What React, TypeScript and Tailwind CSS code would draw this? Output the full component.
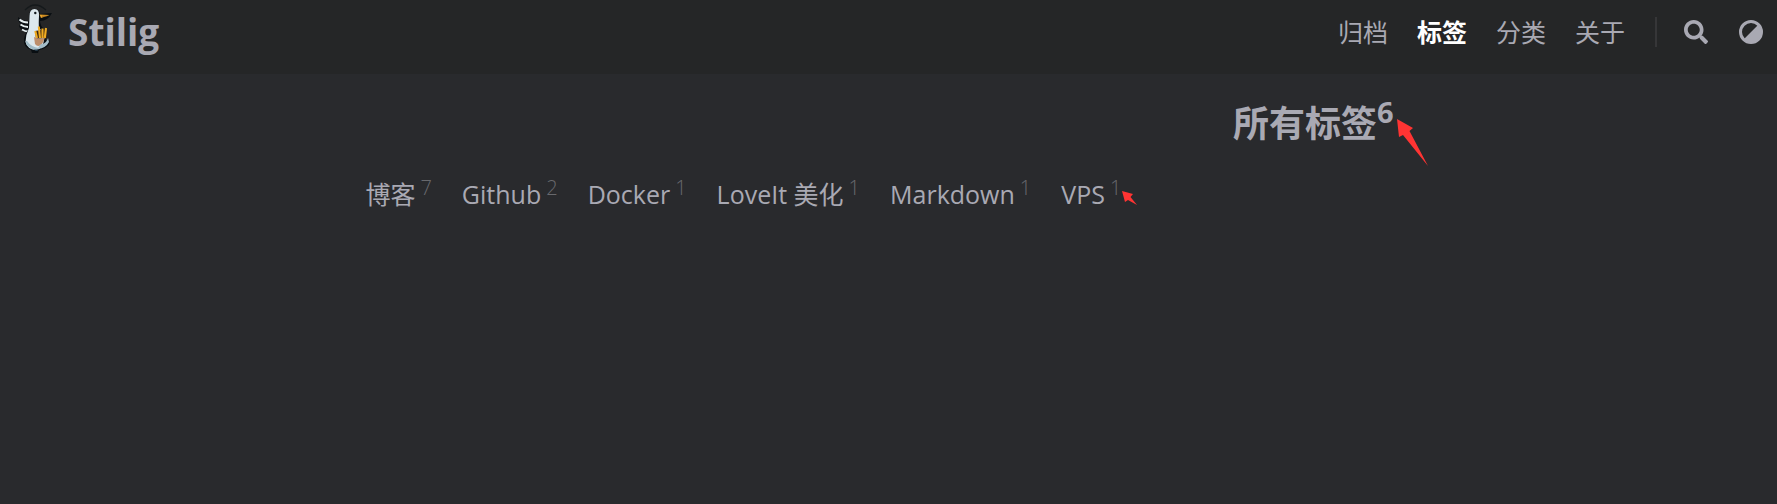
import React from "react";

const navLinks = [
  { label: "归档", active: false },
  { label: "标签", active: true },
  { label: "分类", active: false },
  { label: "关于", active: false },
];

const tags = [
  { name: "博客", count: 7 },
  { name: "Github", count: 2 },
  { name: "Docker", count: 1 },
  { name: "LoveIt 美化", count: 1 },
  { name: "Markdown", count: 1 },
  { name: "VPS", count: 1, marked: true },
];

function Logo() {
  return (
    <svg viewBox="0 0 36 50" className="h-[50px] w-9" aria-hidden="true">
      <path d="M8 6Q18-4 29 6" fill="none" stroke="#15191b" strokeWidth="1.2" />
      <path d="M12 17Q5 17 1 13Q1 18 4 20Q1 21 3 24Q5 27 12 28Z" fill="#0b1014" />
      <path d="M2.500 15.500Q6 18.500 11 18.500M3.500 20.500Q7 23 11 23M5 25.500Q8 27.500 11 27.500" fill="none" stroke="#e4edef" strokeWidth="1.900" />
      <path d="M12 12Q12 5 17.500 5Q22 5 23 10L35 9Q31 17 23 17Q23 22 28 26L29 37Q34 34 32 41Q28 45 22 46L21 49H15L14 46Q6 43 7 35Q8 29 12 25Z" fill="#090e12" />
      <path d="M12.500 12Q12.500 5 17.500 5Q22.500 5 22 12Q21.500 20 22 24Q27 28 27 36Q26 45 19 46Q10 45 8.500 38Q8.500 31 12 24Z" fill="#dce7ec" />
      <path d="M8.500 37Q10 45 19 46L22 44Q14 43 10 37Z" fill="#a0bbc7" />
      <path d="M22.500 10.500L32.500 11L24 14Z" fill="#e9a42b" />
      <path d="M25 12.200L30 12" stroke="#8a5412" strokeWidth=".7" />
      <circle cx="18.300" cy="9" r="1.200" fill="#11171b" />
      <path d="M18 27L30 25V34L19 35Z" fill="#3b2711" />
      <path d="M18.300 27L20 34M21.800 22.500L23 34M25.500 24.500L25.500 34M29 24L27.800 34" stroke="#f0ac22" strokeWidth="2.100" />
      <path d="M17 33Q22 35.500 28 34L25 40Q21 44 18 40Z" fill="#bd8e6b" />
      <path d="M31 34Q29 40 24 40Q21 43 21 45Q29 44 32 38Z" fill="#a3bdc9" />
      <path d="M17 45.500Q19 48.500 22 45.500" fill="#263b49" />
    </svg>
  );
}

function SearchIcon() {
  return (
    <svg viewBox="0 0 512 512" className="size-6" fill="currentColor" aria-hidden="true">
      <path d="M505 442.700 405.300 343c-4.500-4.500-10.600-7-17-7H372c27.600-35.300 44-79.700 44-128C416 93.100 322.900 0 208 0S0 93.100 0 208s93.100 208 208 208c48.300 0 92.700-16.400 128-44v16.300c0 6.400 2.500 12.500 7 17l99.700 99.700c9.400 9.400 24.600 9.400 33.900 0l28.300-28.300c9.400-9.400 9.400-24.600.1-34zM208 336c-70.700 0-128-57.200-128-128 0-70.700 57.200-128 128-128 70.700 0 128 57.200 128 128 0 70.700-57.200 128-128 128z" />
    </svg>
  );
}

function ThemeIcon() {
  return (
    <svg viewBox="0 0 24 24" className="size-6" aria-hidden="true">
      <circle cx="12" cy="12" r="10.500" fill="none" stroke="currentColor" strokeWidth="3" />
      <path d="M19.500 4.500A10.600 10.600 0 0 1 4.500 19.500Z" fill="currentColor" />
    </svg>
  );
}

export default function App() {
  return (
    <div className="min-h-screen bg-[#292a2d] font-['Open_Sans','Noto_Sans_CJK_SC',sans-serif] text-[25px] leading-8 text-[#a9a9b3]">
      <header className="flex h-[74px] items-start justify-between bg-[#252627] pr-3.5 pl-[17px]">
        <a href="#home" className="flex items-start gap-[15px]">
          <span className="pt-1"><Logo /></span>
          <span className="pt-2 text-[37px] leading-12 font-bold">Stilig</span>
        </a>
        <nav className="flex h-16 items-center">
          <div className="flex gap-[29px]">
            {navLinks.map((link) => (
              <a
                key={link.label}
                href={"#" + link.label}
                className={link.active ? "font-bold text-white" : ""}
              >
                {link.label}
              </a>
            ))}
          </div>
          <span className="ml-[30px] h-[30px] w-0.5 bg-[#363638]" />
          <button type="button" aria-label="搜索" className="ml-[27px]">
            <SearchIcon />
          </button>
          <button type="button" aria-label="切换主题" className="ml-[31px]">
            <ThemeIcon />
          </button>
        </nav>
      </header>
      <main className="mx-auto w-3/5 pt-5">
        <h1 className="flex justify-end pr-7 text-4xl leading-15 font-bold">
          <span>所有标签</span>
          <span className="relative">
            <sup className="top-[-14px] text-[29px] leading-none">6</sup>
            <svg viewBox="0 0 34 50" className="absolute top-6 left-full h-[50px] w-[34px]" aria-hidden="true">
              <path d="M3 1L19 10L15.500 13L34 48L9 17L5 19Z" fill="#ff3433" />
            </svg>
          </span>
        </h1>
        <ul className="flex flex-wrap gap-x-[30px] pt-5 pl-2.5">
          {tags.map((tag) => (
            <li key={tag.name} className="flex leading-10">
              <a href={"#" + tag.name} className="flex gap-[5px]">
                <span>{tag.name}</span>
                <span className="relative text-xl leading-7 font-light text-[#68696d]">
                  {tag.count}
                  {tag.marked && (
                    <svg viewBox="0 0 18 18" className="absolute top-4 left-full size-[18px]" aria-hidden="true">
                      <path d="M1 1L12 4L9.500 7L16 15L7 10L4 12Z" fill="#ff3433" />
                    </svg>
                  )}
                </span>
              </a>
            </li>
          ))}
        </ul>
      </main>
    </div>
  );
}
